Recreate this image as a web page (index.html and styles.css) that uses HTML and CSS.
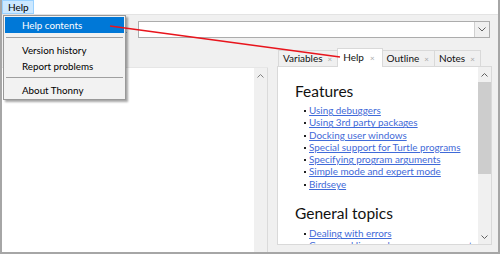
FILE: index.html
```html
<!DOCTYPE html>
<html>
<head>
<meta charset="utf-8">
<title>Thonny help</title>
<link rel="stylesheet" href="styles.css">
</head>
<body>
<div class="window">
  <div class="menubar"><span class="menu-title">Help</span></div>
  <div class="toolbar">
    <span class="tb-label">Search:</span>
    <div class="combo">
      <div class="combo-field"></div>
      <div class="combo-btn"><svg width="8" height="5" viewBox="0 0 8 5"><path d="M0.5 0.5 L4 4 L7.5 0.5" fill="none" stroke="#606060" stroke-width="1"/></svg></div>
    </div>
  </div>
  <div class="main">
    <div class="editor">
      <div class="editor-text"></div>
      <div class="vscroll">
        <div class="arrow"><svg width="7" height="4" viewBox="0 0 7 4"><path d="M0.5 3.5 L3.5 0.5 L6.5 3.5" fill="none" stroke="#808080"/></svg></div>
      </div>
    </div>
    <div class="notebook">
      <div class="tabs">
        <div class="tab">Variables<span class="x">×</span></div>
        <div class="tab selected">Help<span class="x">×</span></div>
        <div class="tab">Outline<span class="x">×</span></div>
        <div class="tab">Notes<span class="x">×</span></div>
      </div>
      <div class="pane">
        <div class="help-text">
          <h2 class="first">Features</h2>
          <ul>
            <li><a href="#">Using debuggers</a></li>
            <li><a href="#">Using 3rd party packages</a></li>
            <li><a href="#">Docking user windows</a></li>
            <li><a href="#">Special support for Turtle programs</a></li>
            <li><a href="#">Specifying program arguments</a></li>
            <li><a href="#">Simple mode and expert mode</a></li>
            <li><a href="#">Birdseye</a></li>
          </ul>
          <h2>General topics</h2>
          <ul>
            <li><a href="#">Dealing with errors</a></li>
            <li><a href="#">Command line and program arguments</a></li>
          </ul>
        </div>
        <div class="pscroll">
          <div class="arrow"><svg width="7" height="4" viewBox="0 0 7 4"><path d="M0.5 3.5 L3.5 0.5 L6.5 3.5" fill="none" stroke="#606060"/></svg></div>
          <div class="thumb"></div>
          <div class="spacer"></div>
          <div class="arrow"><svg width="7" height="4" viewBox="0 0 7 4"><path d="M0.5 0.5 L3.5 3.5 L6.5 0.5" fill="none" stroke="#606060"/></svg></div>
        </div>
      </div>
    </div>
  </div>

  <div class="dropdown">
    <div class="item active">Help contents</div>
    <div class="sep sep1"></div>
    <div class="item">Version history</div>
    <div class="item">Report problems</div>
    <div class="sep sep2"></div>
    <div class="item">About Thonny</div>
  </div>

  <svg class="annotation" width="500" height="254" viewBox="0 0 500 254">
    <line x1="110" y1="26" x2="340" y2="57" stroke="#e8141c" stroke-width="1.6"/>
  </svg>
</div>
</body>
</html>
```

FILE: styles.css
```css
html, body {
  margin: 0;
  padding: 0;
}
body {
  width: 500px;
  height: 254px;
  overflow: hidden;
  font-family: "Lato", "Open Sans", sans-serif;
  color: #000;
  background: #fff;
}
.window {
  position: relative;
  width: 500px;
  height: 254px;
  box-sizing: border-box;
  border: 2px solid #a6a6a6;
  border-top: 0;
  background: #f0f0f0;
  display: flex;
  flex-direction: column;
}
.menubar {
  height: 14px;
  flex: 0 0 14px;
  background: #fff;
  border-bottom: 1px solid #e3e3e3;
  display: flex;
}
.menu-title {
  width: 32px;
  height: 14px;
  box-sizing: border-box;
  padding-left: 5px;
  background: #cce8ff;
  border: 1px solid #99d1ff;
  font-size: 10px;
  line-height: 12px;
}
.toolbar {
  flex: 0 0 31px;
  height: 31px;
  box-sizing: border-box;
  padding-top: 6px;
  display: flex;
  align-items: flex-start;
}
.tb-label {
  flex: 0 0 125px;
  margin-right: 11px;
  text-align: right;
  font-size: 10px;
  line-height: 17px;
  color: #333;
}
.combo {
  flex: 0 0 352px;
  height: 17px;
  box-sizing: border-box;
  border: 1px solid #acacac;
  background: #fff;
  display: flex;
}
.combo-field {
  flex: 1;
}
.combo-btn {
  width: 14px;
  border-left: 1px solid #d0d0d0;
  background: #f0f0f0;
  display: flex;
  align-items: center;
  justify-content: center;
}
.combo-btn svg {
  display: block;
}
.main {
  flex: 1;
  display: flex;
  gap: 9px;
  min-height: 0;
}
.editor {
  width: 266px;
  margin-top: 21px;
  display: flex;
  background: #fff;
  border-top: 1px solid #e6e6e6;
  box-sizing: border-box;
}
.editor-text {
  flex: 1;
}
.vscroll {
  width: 13px;
  background: #f0f0f0;
  border-right: 1px solid #dadada;
}
.arrow {
  height: 15px;
  display: flex;
  align-items: center;
  justify-content: center;
}
.arrow svg {
  display: block;
}
.notebook {
  width: 215px;
  display: flex;
  flex-direction: column;
}
.tabs {
  height: 20px;
  flex: 0 0 20px;
  box-sizing: border-box;
  padding-left: 1px;
  display: flex;
  align-items: flex-end;
  position: relative;
  z-index: 1;
}
.tab {
  height: 16px;
  box-sizing: border-box;
  padding: 0 5px 0 4px;
  border: 1px solid #d9d9d9;
  border-bottom: 0;
  margin-right: -1px;
  background: #f0f0f0;
  font-size: 10px;
  line-height: 15px;
  color: #111;
  white-space: nowrap;
}
.tab .x {
  color: #a8a8a8;
  margin-left: 5px;
  font-size: 8px;
}
.tab.selected {
  height: 19px;
  margin-bottom: -1px;
  padding-left: 5px;
  padding-right: 7px;
  background: #fff;
  line-height: 17px;
}
.tab.selected .x {
  margin-left: 6px;
}
.pane {
  height: 179px;
  flex: 0 0 179px;
  box-sizing: border-box;
  border: 1px solid #d9d9d9;
  background: #fff;
  display: flex;
}
.help-text {
  flex: 1;
  overflow: hidden;
  padding-left: 17px;
}
.help-text h2 {
  margin: 15px 0 5px 0;
  font-size: 15.5px;
  line-height: 17px;
  font-weight: 400;
  color: #111;
}
.help-text h2.first {
  margin-top: 16px;
  margin-bottom: 4px;
}
.help-text ul {
  margin: 0;
  padding-left: 14px;
  list-style: none;
}
.help-text li {
  position: relative;
  font-size: 9.9px;
  line-height: 12.3px;
  white-space: nowrap;
}
.help-text li::before {
  content: "";
  position: absolute;
  left: -5px;
  top: 6px;
  width: 2px;
  height: 2px;
  background: #222;
}
.help-text a {
  color: #3f6ad8;
  text-decoration: underline;
}
.pscroll {
  width: 13px;
  background: #f0f0f0;
  display: flex;
  flex-direction: column;
}
.thumb {
  height: 92px;
  background: #cdcdcd;
}
.spacer {
  flex: 1;
}
.dropdown {
  position: absolute;
  left: 1px;
  top: 15px;
  width: 123px;
  box-sizing: border-box;
  border: 1px solid #999;
  background: #f2f2f2;
  padding: 1px;
  box-shadow: 2px 2px 2px rgba(0, 0, 0, 0.35);
  z-index: 5;
  font-size: 9.8px;
}
.item {
  height: 16px;
  line-height: 16px;
  padding-left: 17px;
  color: #000;
}
.item.active {
  background: #0078d7;
  color: #fff;
}
.sep {
  height: 1px;
  margin: 4px 1px 4px 1px;
  background: #a0a0a0;
}
.sep2 {
  margin-top: 3px;
}
.annotation {
  position: absolute;
  left: -2px;
  top: 0;
  z-index: 10;
  pointer-events: none;
}
```
